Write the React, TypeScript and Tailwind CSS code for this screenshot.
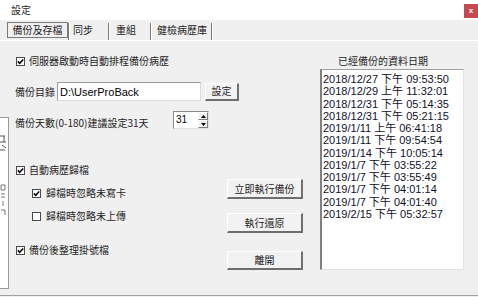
import React from "react";

const CJK = "font-['Noto_Sans_CJK_TC','Noto_Sans_CJK_SC',sans-serif]";
const LIST = "font-['Liberation_Sans','Noto_Sans_CJK_TC',sans-serif]";

function Check({ checked }: { checked: boolean }) {
  return (
    <span className="w-[9px] h-[9px] bg-white border border-[#4a4a4a] flex items-center justify-center shrink-0">
      {checked && (
        <svg width="7" height="7" viewBox="0 0 7 7">
          <path d="M0.8 3.4 L2.7 5.3 L6.2 1.4" stroke="#000" strokeWidth="1.5" fill="none" />
        </svg>
      )}
    </span>
  );
}

function Btn({ children, h }: { children: React.ReactNode; h: string }) {
  return (
    <div
      className={`${h} w-[76px] flex items-center justify-center bg-[#f2f2f2] border-t border-l border-t-white border-l-white border-r-2 border-b-2 border-r-[#6e6e6e] border-b-[#6e6e6e] text-[10px] leading-[12px] text-[#222] ${CJK}`}
    >
      {children}
    </div>
  );
}

function Sep() {
  return <div className="mt-[3px] w-[2px] h-[18px] border-l border-l-[#7a7a7a] border-r border-r-white shrink-0" />;
}

const dates = [
  "2018/12/27 下午 09:53:50",
  "2018/12/29 上午 11:32:01",
  "2018/12/31 下午 05:14:35",
  "2018/12/31 下午 05:21:15",
  "2019/1/11 上午 06:41:18",
  "2019/1/11 下午 09:54:54",
  "2019/1/14 下午 10:05:14",
  "2019/1/7 下午 03:55:22",
  "2019/1/7 下午 03:55:49",
  "2019/1/7 下午 04:01:14",
  "2019/1/7 下午 04:01:40",
  "2019/2/15 下午 05:32:57",
];

export default function App() {
  return (
    <div className={`w-[478px] h-[297px] bg-[#f0f0f0] relative overflow-hidden flex flex-col text-[#1e1e1e] ${CJK}`}>
      {/* Title bar */}
      <div className="h-[20px] bg-white flex items-start justify-between shrink-0">
        <span className="ml-[11px] mt-[4px] text-[10px] leading-[12px]">設定</span>
        <div className="mt-[4px] w-[14px] h-[14px] bg-[#c9474f] text-white text-[8px] font-bold flex items-center justify-center leading-none font-['Liberation_Sans',sans-serif]">
          x
        </div>
      </div>

      {/* Tab strip */}
      <div className="h-[20px] flex items-start pl-[7px] shrink-0 text-[10px] leading-[12px]">
        <div className="mt-[2px] w-[61px] h-[16px] border border-[#7a7a7a] flex items-center justify-center">
          備份及存檔
        </div>
        <Sep />
        <div className="w-[38px] h-full flex items-center pl-[3px]">同步</div>
        <Sep />
        <div className="w-[40px] h-full flex items-center pl-[6px]">重組</div>
        <Sep />
        <div className="w-[59px] h-full flex items-center pl-[5px]">健檢病歷庫</div>
        <Sep />
      </div>

      {/* Content */}
      <div className="h-[256px] border-t border-t-white border-b border-b-[#a0a0a0] flex shrink-0 text-[10px] leading-[12px]">
        {/* Left column */}
        <div className="flex-1 pl-[15px] flex flex-col">
          <div className="mt-[14px] h-[12px] flex items-center gap-[4px]">
            <span className="ml-[1px]">
              <Check checked />
            </span>
            <span>伺服器啟動時自動排程備份病歷</span>
          </div>

          <div className="mt-[15px] h-[19px] flex items-center">
            <span className="w-[42px]">備份目錄</span>
            <div className="w-[144px] h-[19px] bg-white border-t border-l border-[#9a9a9a] border-r border-b border-r-[#dcdcdc] border-b-[#dcdcdc] flex items-center pl-[2px] text-[11px] text-black font-['Liberation_Sans',sans-serif]">
              D:\UserProBack
            </div>
            <div className="ml-[4px] w-[34px] h-[18px] flex items-center justify-center bg-[#f2f2f2] border-t border-l border-t-white border-l-white border-r-2 border-b-2 border-r-[#6e6e6e] border-b-[#6e6e6e]">
              設定
            </div>
          </div>

          <div className="mt-[10px] h-[18px] flex items-end">
            <span className="w-[158px] leading-[12px]">備份天數(0-180)建議設定31天</span>
            <div className="w-[36px] h-[18px] bg-white border-t border-l border-[#8a8a8a] border-r border-b border-r-[#e0e0e0] border-b-[#e0e0e0] flex">
              <div className="flex-1 pl-[2px] flex items-center text-[10px] text-black font-['Liberation_Sans',sans-serif]">31</div>
              <div className="w-[10px] flex flex-col">
                <div className="flex-1 bg-[#f0f0f0] border-t border-l border-white border-r border-b border-r-[#808080] border-b-[#808080] flex items-center justify-center">
                  <svg width="5" height="3" viewBox="0 0 5 3">
                    <path d="M2.5 0 L5 3 L0 3 Z" fill="#000" />
                  </svg>
                </div>
                <div className="flex-1 bg-[#f0f0f0] border-t border-l border-white border-r border-b border-r-[#808080] border-b-[#808080] flex items-center justify-center">
                  <svg width="5" height="3" viewBox="0 0 5 3">
                    <path d="M0 0 L5 0 L2.5 3 Z" fill="#000" />
                  </svg>
                </div>
              </div>
            </div>
          </div>

          <div className="mt-[35px] flex">
            <div className="w-[212px] flex flex-col">
              <div className="h-[12px] flex items-center gap-[4px]">
                <span className="ml-[1px]">
                  <Check checked />
                </span>
                <span>自動病歷歸檔</span>
              </div>
              <div className="mt-[11px] h-[12px] flex items-center gap-[5px] ml-[17px]">
                <Check checked />
                <span>歸檔時忽略未寫卡</span>
              </div>
              <div className="mt-[11px] h-[12px] flex items-center gap-[5px] ml-[17px]">
                <Check checked={false} />
                <span>歸檔時忽略未上傳</span>
              </div>
              <div className="mt-[22px] h-[12px] flex items-center gap-[4px]">
                <span className="ml-[1px]">
                  <Check checked />
                </span>
                <span>備份後整理掛號檔</span>
              </div>
            </div>
            <div className="flex flex-col">
              <div className="mt-[15px]">
                <Btn h="h-[20px]">立即執行備份</Btn>
              </div>
              <div className="mt-[14px]">
                <Btn h="h-[20px]">執行還原</Btn>
              </div>
              <div className="mt-[18px]">
                <Btn h="h-[19px]">離開</Btn>
              </div>
            </div>
          </div>
        </div>

        {/* Right column */}
        <div className="w-[144px] mr-[14px] flex flex-col">
          <div className="mt-[14px] h-[12px] pl-[18px] flex items-center">已經備份的資料日期</div>
          <div className="mt-[2px] h-[201px] bg-white border-l-2 border-l-[#808080] border-t border-t-[#a0a0a0] border-r border-r-[#e3e3e3] border-b border-b-[#e3e3e3] pl-[1px] pt-[3px] overflow-hidden">
            {dates.map((d) => (
              <div key={d} className={`h-[12.25px] leading-[12.25px] text-[11px] text-[#10102a] whitespace-nowrap ${LIST}`}>
                {d}
              </div>
            ))}
          </div>
        </div>
      </div>

      {/* Background window sliver at the left edge */}
      <div className="absolute left-0 top-[117px] w-[9px] h-[172px] bg-white border-t border-r border-b border-[#9a9a9a]">
        <svg className="absolute left-0 top-[16px]" width="8" height="18" viewBox="0 0 8 18">
          <path d="M0 2 H5 M4 2 V8 M0 8 H6 M2 11 L6 14 M0 16 H5" stroke="#555" strokeWidth="1" fill="none" />
        </svg>
        <svg className="absolute left-0 top-[66px]" width="8" height="34" viewBox="0 0 8 34">
          <path d="M1 1 H5 V6 H1 Z M1 10 H5 M1 13 H5 M3 17 V22 M1 26 H5 V31" stroke="#777" strokeWidth="1" fill="none" />
        </svg>
      </div>
    </div>
  );
}
